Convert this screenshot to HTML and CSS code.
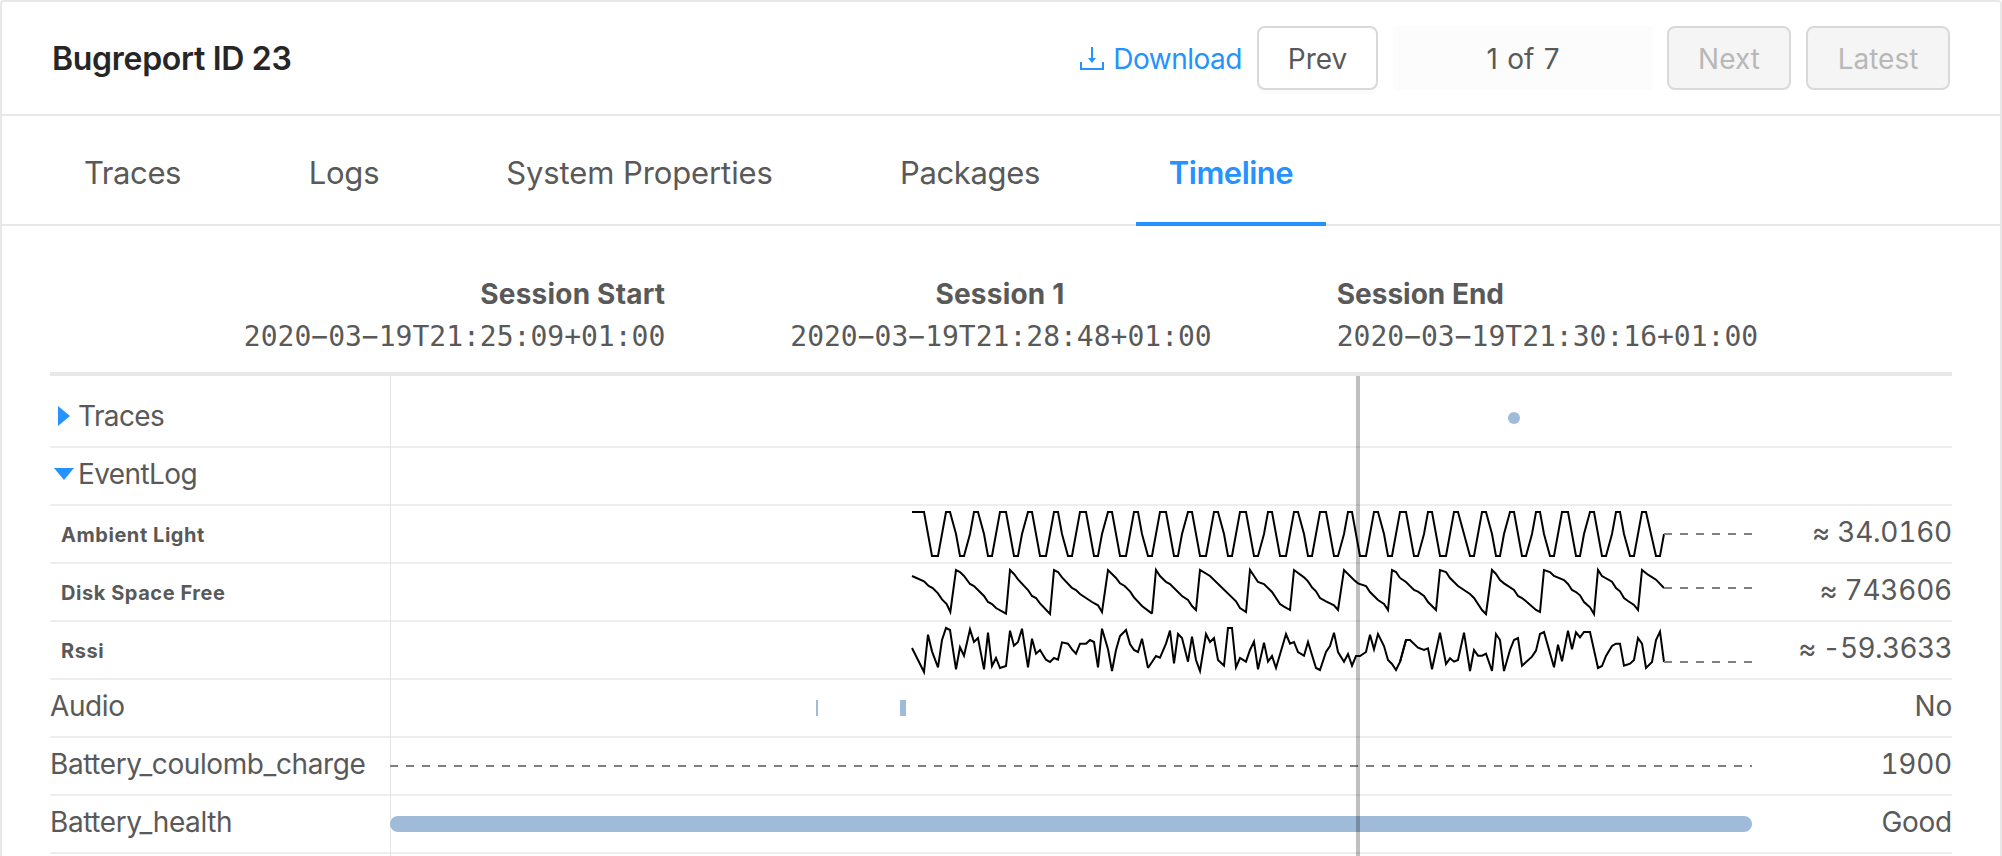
FILE: index.html
```html
<!DOCTYPE html>
<html lang="en">
<head>
<meta charset="utf-8">
<title>Bugreport ID 23</title>
<link rel="stylesheet" href="styles.css">
</head>
<body>
<main class="card">
  <header class="card-head">
    <h1 class="title">Bugreport ID 23</h1>
    <div class="actions">
      <a class="download">
        <svg class="download-icon" viewBox="0 0 24 24"><path d="M1 15v7h22v-7" fill="none" stroke="currentColor" stroke-width="2"/><path d="M11 0h2v11h3l-4 5-4-5h3z" fill="currentColor"/></svg>
        <span>Download</span>
      </a>
      <button class="btn btn-prev">Prev</button>
      <span class="position">1 of 7</span>
      <button class="btn btn-next" disabled>Next</button>
      <button class="btn btn-latest" disabled>Latest</button>
    </div>
  </header>
  <nav class="tabs">
    <a class="tab tab-traces"><span>Traces</span></a>
    <a class="tab tab-logs"><span>Logs</span></a>
    <a class="tab tab-system"><span>System Properties</span></a>
    <a class="tab tab-packages"><span>Packages</span></a>
    <a class="tab tab-timeline active"><span>Timeline</span></a>
  </nav>
  <section class="body">
    <div class="sessions">
      <div class="session session-start"><b>Session Start</b><code>2020−03−19T21:25:09+01:00</code></div>
      <div class="session session-mid"><b>Session 1</b><code>2020−03−19T21:28:48+01:00</code></div>
      <div class="session session-end"><b>Session End</b><code>2020−03−19T21:30:16+01:00</code></div>
    </div>
    <div class="timeline">
      <div class="row row-first">
        <div class="label group"><svg class="caret" viewBox="0 0 20 20"><path d="M4 0v20l12-10z" fill="currentColor"/></svg><span class="name">Traces</span></div>
        <svg class="track" viewBox="0 0 1362 56"><circle class="mark" cx="1124" cy="28" r="6"/></svg>
        <div class="value"></div>
      </div>
      <div class="row">
        <div class="label group"><svg class="caret" viewBox="0 0 20 20"><path d="M0 4h20L10 16z" fill="currentColor"/></svg><span class="name">EventLog</span></div>
        <div class="track"></div>
        <div class="value"></div>
      </div>
      <div class="row">
        <div class="label sub"><span>Ambient Light</span></div>
        <svg class="track" viewBox="0 0 4086 168">
          <g class="spark">
            <polyline transform="translate(1530 -48)" points="36,66 72,66 96,198 114,198 138,66 150,66 168,132 180,198 192,198 210,132 222,66 234,66 252,132 264,198 276,198 300,66 318,66 342,198 354,198 366,132 384,66 396,66 420,198 438,198 462,66 474,66 486,132 504,198 516,198 540,66 558,66 582,198 594,198 606,132 624,66 636,66 660,198 678,198 702,66 714,66 726,132 744,198 756,198"/>
            <polyline transform="translate(2280 -48)" points="0,198 6,198 30,66 48,66 72,198 84,198 96,132 114,66 126,66 150,198 168,198 192,66 204,66 222,132 234,198 246,198 270,66 288,66 312,198 324,198 342,132 354,66 366,66 390,198 408,198 432,66 444,66 462,132 474,198 486,198 510,66 528,66 552,198 564,198 582,132 594,66 606,66 630,198 648,198 672,66 684,66 702,132 714,198 726,198 750,66 768,66"/>
            <polyline transform="translate(3030 -48)" points="0,66 18,66 42,198 54,198 72,132 84,66 96,66 120,198 138,198 162,66 174,66 210,198 222,198 246,66 258,66 276,132 288,198 300,198 312,132 330,66 342,66 366,198 378,198 396,132 408,66 420,66 432,132 450,198 462,198 486,66 504,66 528,198 540,198 552,132 570,66 582,66 606,198 618,198 636,132 648,66 660,66 672,132 690,198 702,198 726,66 738,66 768,198 780,198 792,132"/>
          </g>
          <path class="dash" d="M3822 84H4086"/>
        </svg>
        <div class="value"><span>≈ 34.0160</span></div>
      </div>
      <div class="row">
        <div class="label sub"><span>Disk Space Free</span></div>
        <svg class="track" viewBox="0 0 4086 168">
          <g class="spark">
            <polyline transform="translate(1530 -222)" points="36,258 72,274 86,288 98,294 114,310 126,328 140,342 151,366 168,240 180,246 192,258 210,282 222,288 252,318 264,336 276,342 288,354 318,371 330,240 342,252 354,268 384,300 396,318 408,324 420,340 450,372 462,240 474,246 486,262 516,294 528,300 540,312 576,336 594,346 606,366 624,240 648,264 660,280 674,288 690,304 702,322 726,348 756,371"/>
            <polyline transform="translate(2280 -222)" points="6,371 18,240 30,258 48,276 60,282 96,318 114,330 126,348 138,360 150,240 180,258 258,334 270,354 288,366 300,240 324,276 342,282 366,306 390,342 402,350 420,360 432,240 462,262 474,274 486,292 498,304 510,324 528,334 552,346 564,360 582,240 612,270 624,280 648,288 660,306 684,330 702,342 714,360 726,240 738,246 750,264"/>
            <polyline transform="translate(3030 -222)" points="0,264 18,276 42,300 54,305 72,318 84,336 108,360 120,240 138,246 150,264 174,288 210,312 222,324 246,360 258,372 276,240 288,252 300,270 312,280 342,300 354,318 366,324 378,334 408,360 420,366 432,240 450,246 462,258 492,270 504,282 516,300 528,306 540,316 552,336 570,352 582,372 594,240 606,258 636,275 648,294 660,304 672,324 684,333 702,345 714,360 726,240 744,254 768,269 792,294"/>
          </g>
          <path class="dash" d="M3822 72H4086"/>
        </svg>
        <div class="value"><span>≈ 743606</span></div>
      </div>
      <div class="row">
        <div class="label sub"><span>Rssi</span></div>
        <svg class="track" viewBox="0 0 4086 168">
          <g class="spark">
            <polyline transform="translate(1530 -396)" points="36,474 72,546 84,434 96,484 114,532 126,450 138,414 150,420 168,538 180,472 192,497 210,418 222,456 234,444 252,538 264,428 276,528 288,504 300,534 318,528 330,422 342,467 354,456 366,416 384,532 396,446 408,491 420,480 438,509 450,516 462,504 474,509 486,457 504,461 516,478 528,491 540,461 558,461 570,450 582,456 594,532 606,416 624,478 636,543 648,480 660,438 678,420 690,462 702,480 714,486 726,446 744,534"/>
            <polyline transform="translate(2280 -396)" points="-6,534 18,498 30,503 48,461 60,422 72,520 84,432 96,444 114,515 126,440 138,510 150,543 168,432 180,456 192,444 204,510 222,527 234,414 246,414 258,532 270,504 288,515 300,480 312,455 324,538 342,458 354,515 366,498 378,534 408,432 420,461 432,456 444,486 462,497 474,456 498,534 510,540 528,486 540,468 552,428 564,486 582,515 594,492 606,527 618,498 630,498 648,486 660,434 672,478 684,432 702,468 714,510 726,522 738,540 750,516 768,450"/>
            <polyline transform="translate(3030 -396)" points="0,516 18,450 30,450 54,473 72,480 84,475 96,538 120,428 138,522 150,505 162,515 174,510 192,428 210,543 222,480 234,497 246,497 258,491 276,543 288,432 300,450 312,543 330,480 342,450 354,444 366,527 396,500 408,482 420,432 432,426 462,532 474,464 486,514 504,422 516,478 528,427 540,442 552,426 570,426 594,534 606,528 618,498 636,468 648,461 660,461 672,527 690,521 702,510 714,444 726,461 738,534 756,516 768,450 780,425 792,516"/>
          </g>
          <path class="dash" d="M3822 120H4086"/>
        </svg>
        <div class="value"><span class="negative">≈ -59.3633</span></div>
      </div>
      <div class="row">
        <div class="label"><span class="name">Audio</span></div>
        <svg class="track" viewBox="0 0 1362 56"><path class="mark" d="M426 20h2v16h-2zM510 20h6v16h-6z"/></svg>
        <div class="value"><span>No</span></div>
      </div>
      <div class="row">
        <div class="label"><span class="name">Battery_coulomb_charge</span></div>
        <svg class="track" viewBox="0 0 4086 168"><path class="dash" d="M0 84H4086"/></svg>
        <div class="value"><span>1900</span></div>
      </div>
      <div class="row">
        <div class="label"><span class="name">Battery_health</span></div>
        <svg class="track" viewBox="0 0 1362 56"><rect class="mark" y="20" width="1362" height="16" rx="8"/></svg>
        <div class="value"><span>Good</span></div>
      </div>
      <div class="playhead"></div>
    </div>
  </section>
</main>
</body>
</html>
```
FILE: styles.css
```css
* { box-sizing: border-box; }

body {
  margin: 0;
  height: 856px;
  overflow: hidden;
  background: #fff;
  color: #595959;
  font: 28px/42px Inter, "Liberation Sans", sans-serif;
}

.card {
  height: 880px;
  border: 2px solid #e8e8e8;
  border-radius: 4px;
}

.card-head {
  display: flex;
  align-items: center;
  justify-content: space-between;
  height: 114px;
  padding: 0 50px;
  border-bottom: 2px solid #e8e8e8;
}

.title {
  margin: 0;
  padding-top: 2px;
  color: #262626;
  font-size: 32px;
  font-weight: 600;
  letter-spacing: -0.3px;
}

.actions { display: flex; align-items: center; }

.download {
  display: flex;
  align-items: center;
  gap: 9px;
  margin-right: 15px;
  padding-top: 2px;
  color: #2492ff;
  letter-spacing: -0.5px;
}

.download-icon { width: 24px; height: 24px; }

.btn {
  height: 64px;
  padding: 2px 0 0;
  border: 2px solid #d9d9d9;
  border-radius: 8px;
  background: #fff;
  box-shadow: 0 4px 0 rgba(0, 0, 0, 0.015);
  color: #595959;
  font: inherit;
}

.btn:disabled { background: #f5f5f5; box-shadow: none; color: #b8b8b8; }
.btn-prev { width: 121px; }
.btn-next { width: 124px; margin-right: 15px; }
.btn-latest { width: 144px; }

.position {
  width: 260px;
  height: 64px;
  margin: 0 14px 0 15px;
  border-radius: 4px;
  background: #fcfcfc;
  line-height: 66px;
  text-align: center;
  word-spacing: 1.5px;
}

.tabs {
  display: flex;
  gap: 64px;
  height: 110px;
  padding-left: 50px;
  border-bottom: 2px solid #e8e8e8;
  font-size: 31px;
  letter-spacing: -0.2px;
  line-height: 114px;
  text-align: center;
}

.tab { height: 110px; white-space: nowrap; }
.tab-traces { width: 161px; letter-spacing: -0.4px; }
.tab-logs { width: 134px; }
.tab-system { width: 329px; letter-spacing: -0.1px; }
.tab-packages { width: 204px; letter-spacing: -0.35px; }
.tab-timeline { width: 190px; }

.tab.active {
  border-bottom: 4px solid #2492ff;
  color: #2492ff;
  font-weight: 600;
  letter-spacing: -0.5px;
}

.body { padding: 47px 48px 0; }

.sessions {
  display: flex;
  justify-content: center;
  gap: 125px;
  height: 103px;
  border-bottom: 4px solid #e8e8e8;
}

.session { display: flex; flex-direction: column; }
.session b { font-weight: 700; }
.session-start { text-align: right; }
.session-start b { letter-spacing: 0.2px; }
.session-mid { text-align: center; }
.session-mid b { padding-right: 2px; letter-spacing: 0.2px; }
.session code { font: 28px/44px "DejaVu Sans Mono", monospace; }

.timeline { position: relative; }

.timeline::before {
  content: "";
  position: absolute;
  top: 0;
  bottom: -40px;
  left: 340px;
  width: 1px;
  background: #e4e4e4;
}

.row {
  display: grid;
  grid-template-columns: 340px 1362px 200px;
  height: 58px;
  border-bottom: 2px solid #eee;
  line-height: 53px;
}

.row-first { height: 72px; padding-top: 14px; }
.label { white-space: nowrap; letter-spacing: -0.4px; }
.group { display: flex; gap: 4px; padding-left: 4px; letter-spacing: -0.6px; }
.caret { width: 20px; height: 20px; margin-top: 16px; color: #2492ff; }

.sub {
  padding-left: 11px;
  font-size: 20px;
  font-weight: 700;
  letter-spacing: 0.55px;
  line-height: 58px;
}

.track { position: relative; width: 1362px; height: 56px; overflow: visible; }
.mark { fill: #9fbbd9; }
.spark { fill: none; stroke: #000; stroke-width: 6; }
.dash { fill: none; stroke: #808080; stroke-width: 6; stroke-dasharray: 24; }

.value {
  font-variant-numeric: tabular-nums;
  letter-spacing: -0.25px;
  text-align: right;
  white-space: nowrap;
}

.negative { letter-spacing: -0.65px; }

.playhead {
  position: absolute;
  top: 0;
  bottom: -40px;
  left: 1306px;
  width: 4px;
  background: rgba(0, 0, 0, 0.25);
}
```
